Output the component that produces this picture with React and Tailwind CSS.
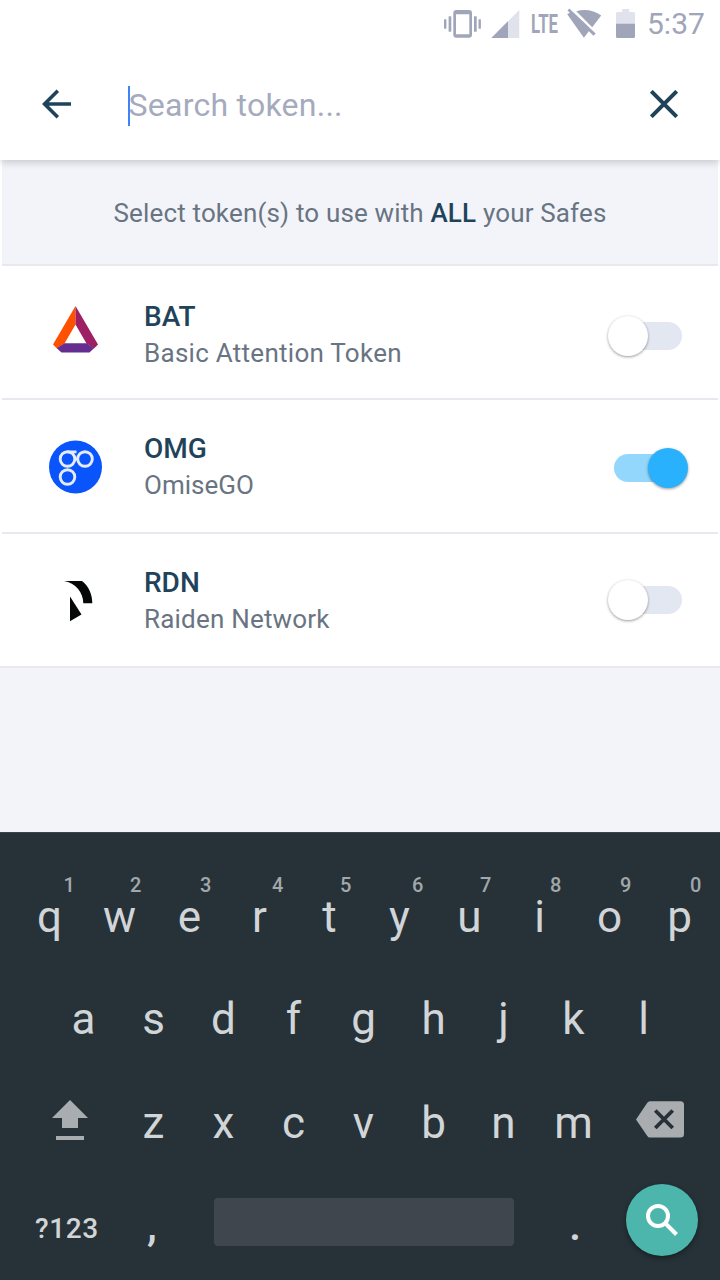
const tokens = [
  { symbol: "BAT", name: "Basic Attention Token", on: false, Logo: BatLogo, textPad: "pt-[33px]", togglePad: "pt-[50px]", tracking: "tracking-[0.27px]" },
  { symbol: "OMG", name: "OmiseGO", on: true, Logo: OmgLogo, textPad: "pt-[31px]", togglePad: "pt-[48px]", tracking: "tracking-normal" },
  { symbol: "RDN", name: "Raiden Network", on: false, Logo: RaidenLogo, textPad: "pt-[31px]", togglePad: "pt-[46px]", tracking: "tracking-[0.2px]" },
];

const topKeys = [
  ["q", "1", "pl-[49px]"],
  ["w", "2", "pl-[45.5px]"],
  ["e", "3", "pl-[45.5px]"],
  ["r", "4", "pl-[47.5px]"],
  ["t", "5", "pl-[45.5px]"],
  ["y", "6", "pl-[47.5px]"],
  ["u", "7", "pl-[45.5px]"],
  ["i", "8", "pl-[45.5px]"],
  ["o", "9", "pl-[45.5px]"],
  ["p", "0", "pl-[45.5px]"],
];

function BatLogo() {
  return (
    <svg width="54" height="54" viewBox="-0.5 0 54 54" className="mt-[37px]">
      <path d="M27 3 4.5 41.5 8.5 45.5 16 40.5 27 21.5Z" fill="#ff5000" />
      <path d="M27 3V21.5L38 40.5 45.5 45.5 49.5 41.5Z" fill="#9e1f63" />
      <path d="M16 40.2H38L45.5 45.3 41 49.5H13L8.3 45.3Z" fill="#662d91" />
    </svg>
  );
}

function OmgLogo() {
  return (
    <svg width="54" height="54" viewBox="-0.5 0 54 54" className="mt-10">
      <circle cx="27" cy="27" r="26.5" fill="#0a54fb" />
      <g fill="none" stroke="#e4edff" strokeWidth="2.9">
        <circle cx="19" cy="19" r="7.3" />
        <circle cx="36.5" cy="19" r="7.3" />
        <circle cx="19" cy="37" r="7.3" />
        <path d="M19 11.9H28M26.3 19H29.2" />
      </g>
    </svg>
  );
}

function RaidenLogo() {
  return (
    <svg width="54" height="54" viewBox="-0.5 0 54 54" className="mt-10">
      <path d="M15.5 7H33.5C40 12 43.8 20 43.8 29.3H34.8C34.8 18.5 27 9 15.5 7Z" fill="#060808" />
      <path d="M21.5 22.5 33 40.5 21.5 47.2Z" fill="#060808" />
    </svg>
  );
}

function StatusBar() {
  return (
    <div className="flex h-12 items-start text-[#a0a5ba]">
      <svg width="37" height="48" viewBox="0 0 37 48" className="ml-[444px]" fill="currentColor">
        <rect x="0" y="19.3" width="2.4" height="9.4" />
        <rect x="4.6" y="16.3" width="2.7" height="15.4" />
        <path fillRule="evenodd" d="M12.3 10H25Q28 10 28 13V34.7Q28 37.7 25 37.7H12.3Q9.3 37.7 9.3 34.7V13Q9.3 10 12.3 10ZM12 14.3V34.3H25.3V14.3Z" />
        <rect x="30" y="16.3" width="2.7" height="15.4" />
        <rect x="34.5" y="19.3" width="2.4" height="9.4" />
      </svg>
      <svg width="29" height="48" viewBox="0 0 29 48" className="ml-[10px]" fill="currentColor">
        <path d="M0.3 38 28.3 10V38Z" fill="#e0e3eb" />
        <path d="M0.3 38 17 21.3V38Z" />
      </svg>
      <div className="ml-[11px] h-12 w-[27px] pt-[9px]">
        <span className="inline-block origin-left scale-x-[0.67] text-[25px] leading-[31px] font-bold">LTE</span>
      </div>
      <svg width="36" height="48" viewBox="0 0 36 48" className="ml-[9px]" fill="currentColor">
        <path d="M0.2 14.2 2.8 12.8 0.5 10.5 2.3 8.5 28.7 33.6 26.5 35.7 21.8 31.2 16.9 37.7Z" />
        <path d="M9.3 11.2C12 10.4 14.5 10 17.2 10 23.5 10 29.5 12 34.2 15.6L25.2 27.2Z" />
      </svg>
      <svg width="20" height="48" viewBox="0 0 20 48" className="ml-[13px]" fill="currentColor">
        <path d="M6.2 9H13.2V12H17.5Q19 12 19 13.5V24H0V13.5Q0 12 1.5 12H6.2Z" fill="#e0e3eb" />
        <path d="M0 23.7H19V36.5Q19 38 17.5 38H1.5Q0 38 0 36.5Z" />
      </svg>
      <span className="ml-[11px] text-[30px] leading-[48px]">5:37</span>
    </div>
  );
}

function Toggle({ on }) {
  return (
    <div className="relative flex h-10 w-[68px] items-center">
      <div className={on ? "h-7 w-full rounded-full bg-[#93d7fd]" : "h-7 w-full rounded-full bg-[#e3e7f1]"} />
      <div
        className={
          on
            ? "absolute left-[34px] size-10 rounded-full bg-[#29b1fd] shadow-[0_1px_3px_rgba(0,0,0,0.4)]"
            : "absolute -left-[6px] size-10 rounded-full bg-white shadow-[0_1px_3px_rgba(0,0,0,0.4)]"
        }
      />
    </div>
  );
}

function Key({ children }) {
  return <div className="w-[70px] text-center">{children}</div>;
}

function Keyboard() {
  return (
    <div className="h-[448px] border-t border-[#3c444a] bg-[#263238] pt-[33px] text-[44px] text-[#d2d5d7]">
      <div className="flex h-[102px] pl-[14.5px]">
        {topKeys.map(([key, hint, pos]) => (
          <div key={key} className="flex w-[70px] flex-col pt-[9px]">
            <span className={`text-xl leading-5 font-medium text-[#a2a7a9] ${pos}`}>{hint}</span>
            <span className="text-center leading-[44px]">{key}</span>
          </div>
        ))}
      </div>
      <div className="flex h-[104px] pl-[48.5px] leading-[103px]">
        {"asdfghjkl".split("").map((k) => (
          <Key key={k}>{k}</Key>
        ))}
      </div>
      <div className="flex h-[102px] leading-[102px]">
        <svg width="36" height="102" viewBox="0 0 36 102" className="ml-[52px] mr-[30.5px]" fill="#a9adaf">
          <path d="M18 28 36 46H26V56H10V46H0Z" />
          <rect x="4" y="64" width="28" height="4" />
        </svg>
        {"zxcvbnm".split("").map((k) => (
          <Key key={k}>{k}</Key>
        ))}
        <svg width="48" height="102" viewBox="0 0 48 102" className="ml-[27.5px]">
          <path d="M14 29.3H44.5Q48 29.3 48 32.8V62Q48 65.5 44.5 65.5H14Q12.3 65.5 11.3 64L0 47.4 11.3 30.8Q12.3 29.3 14 29.3Z" fill="#a9adaf" />
          <path d="M19.3 38.5 36.7 56M36.7 38.5 19.3 56" stroke="#263238" strokeWidth="3.8" />
        </svg>
      </div>
      <div className="flex h-[106px]">
        <div className="ml-[35px] w-[65px] text-[28px] leading-[109px] font-medium tracking-[0.6px]">?123</div>
        <div className="w-[104px] text-center leading-[102px] font-medium">,</div>
        <div className="mt-6 ml-[10px] h-12 w-[300px] rounded bg-[#3f464d]" />
        <div className="ml-[26px] w-[70px] text-center leading-[102px] font-medium">.</div>
        <div className="mt-[10px] ml-4 flex size-[72px] items-center justify-center rounded-full bg-[#4db6ac] shadow-[0_2px_5px_rgba(0,0,0,0.4)]">
          <svg width="72" height="72" viewBox="0 0 72 72" fill="none" stroke="#fff" strokeWidth="4">
            <circle cx="32" cy="32" r="10" />
            <path d="M39 39 50.5 50.5" />
          </svg>
        </div>
      </div>
    </div>
  );
}

export default function App() {
  return (
    <div className="flex h-[1280px] w-[720px] flex-col overflow-hidden bg-white font-['Roboto',sans-serif]">
      <header className="relative z-10 h-40 bg-white shadow-[0_2px_8px_rgba(0,0,0,0.2)]">
        <StatusBar />
        <div className="flex h-28 items-center">
          <svg width="30" height="30" viewBox="0 0 30 30" className="ml-[42px]" fill="none" stroke="#1f435a" strokeWidth="3.6">
            <path d="M29 15H2.5M15.8 1.8 2.5 15 15.8 28.2" />
          </svg>
          <div className="mt-1 ml-14 h-10 w-0.5 bg-[#3d84f7]" />
          <div className="mt-0.5 -ml-[1.5px] w-[499.5px] text-[32px] leading-10 tracking-[0.25px] text-[#a5aabd]">Search token...</div>
          <svg width="28" height="28" viewBox="0 0 28 28" className="ml-[22px]" fill="none" stroke="#1f435a" strokeWidth="4">
            <path d="M1.3 1.3 26.7 26.7M26.7 1.3 1.3 26.7" />
          </svg>
        </div>
      </header>
      <main className="flex h-[672px] flex-col bg-[#f3f4f9]">
        <div className="bg-white px-0.5">
          <div className="h-[106px] border-b-2 border-[#e8e8ee] bg-[#f3f4f9] text-center text-[26px] leading-[106px] tracking-[0.16px] text-[#697482]">
            Select token(s) to use with <span className="font-medium text-[#1f435a]">ALL</span> your Safes
          </div>
        </div>
        {tokens.map(({ symbol, name, on, Logo, textPad, togglePad, tracking }, i) => (
          <div key={symbol} className={i === 2 ? "bg-white" : "bg-white px-0.5"}>
            <div className={i === 2 ? "flex h-[134px] border-b-2 border-[#e8e8ee] px-0.5" : "flex h-[134px] border-b-2 border-[#e8e8ee]"}>
              <div className="ml-[46px] w-24">
                <Logo />
              </div>
              <div className={`w-[470px] text-[26px] leading-9 ${textPad}`}>
                <div className="text-[28px] font-medium text-[#1f435a]">{symbol}</div>
                <div className={`text-[#697482] ${tracking}`}>{name}</div>
              </div>
              <div className={togglePad}>
                <Toggle on={on} />
              </div>
            </div>
          </div>
        ))}
      </main>
      <Keyboard />
    </div>
  );
}
